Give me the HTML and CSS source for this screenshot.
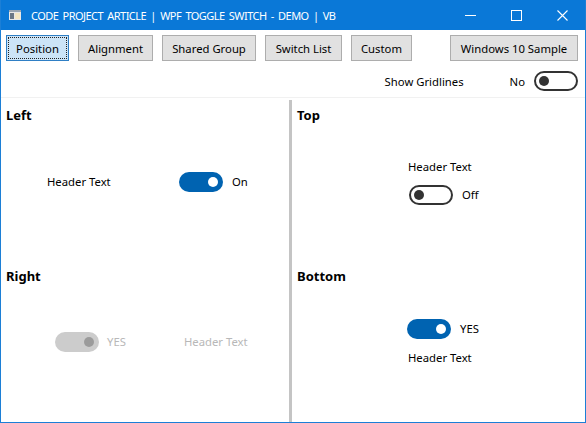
FILE: index.html
```html
<!DOCTYPE html>
<html>
<head>
<meta charset="utf-8">
<link rel="stylesheet" href="styles.css">
</head>
<body>
<div class="window">
  <div class="titlebar">
    <svg class="app-icon" width="12" height="10" viewBox="0 0 12 10">
      <rect x="0" y="0" width="12" height="10" fill="#e8e8e8"/>
      <rect x="0" y="0" width="12" height="2" fill="#9aa6b2"/>
      <rect x="1" y="3" width="4" height="6" fill="#6b7785"/>
      <rect x="6" y="3" width="5" height="6" fill="#f4e7c4"/>
    </svg>
    <span class="title">CODE PROJECT ARTICLE | WPF TOGGLE SWITCH - DEMO | VB</span>
    <div class="controls">
      <span class="ctl"><svg width="11" height="11" viewBox="0 0 11 11"><line x1="0" y1="5.5" x2="11" y2="5.5" stroke="#fff" stroke-width="1"/></svg></span>
      <span class="ctl"><svg width="11" height="11" viewBox="0 0 11 11"><rect x="0.5" y="0.5" width="10" height="10" fill="none" stroke="#fff" stroke-width="1"/></svg></span>
      <span class="ctl"><svg width="11" height="11" viewBox="0 0 11 11"><path d="M0.5 0.5 L10.5 10.5 M10.5 0.5 L0.5 10.5" stroke="#fff" stroke-width="1.1"/></svg></span>
    </div>
  </div>
  <div class="toolbar">
    <div class="btn-row">
      <button class="btn focused w-pos">Position</button>
      <button class="btn w-align">Alignment</button>
      <button class="btn w-shared">Shared Group</button>
      <button class="btn w-list">Switch List</button>
      <button class="btn w-custom">Custom</button>
      <span class="spacer"></span>
      <button class="btn w-win">Windows 10 Sample</button>
    </div>
    <div class="grid-row">
      <span class="lbl">Show Gridlines</span>
      <span class="state">No</span>
      <span class="toggle off"><i class="knob"></i></span>
    </div>
  </div>
  <div class="sep"></div>
  <div class="panels">
    <section class="cell left-col">
      <h2>Left</h2>
      <div class="body body-left">
        <span class="hdr-left">Header Text</span>
        <span class="toggle on"><i class="knob"></i></span>
        <span class="state-txt">On</span>
      </div>
    </section>
    <section class="cell">
      <h2>Top</h2>
      <div class="body body-top">
        <div class="hdr">Header Text</div>
        <div class="sw-row">
          <span class="toggle off"><i class="knob"></i></span>
          <span class="state-txt">Off</span>
        </div>
      </div>
    </section>
    <section class="cell left-col">
      <h2>Right</h2>
      <div class="body body-right">
        <span class="toggle disabled"><i class="knob"></i></span>
        <span class="state-txt dim yes-right">YES</span>
        <span class="dim">Header Text</span>
      </div>
    </section>
    <section class="cell">
      <h2>Bottom</h2>
      <div class="body body-bottom">
        <div class="sw-row">
          <span class="toggle on"><i class="knob"></i></span>
          <span class="state-txt">YES</span>
        </div>
        <div class="hdr hdr-bottom">Header Text</div>
      </div>
    </section>
  </div>
</div>
</body>
</html>
```

FILE: styles.css
```css
* { box-sizing: border-box; }
html, body { margin: 0; padding: 0; background: #fff; }
body {
  font-family: "Noto Sans", "Open Sans", sans-serif;
  font-size: 11.3px;
  color: #000;
}
.window {
  width: 586px;
  height: 423px;
  border: 1px solid #1c7fd6;
  border-top: none;
  display: flex;
  flex-direction: column;
  background: #fff;
  overflow: hidden;
}
.titlebar {
  height: 30px;
  background: #0a78d7;
  color: #fff;
  display: flex;
  align-items: center;
  flex: none;
}
.app-icon { margin-left: 8px; margin-right: 10px; flex: none; }
.title { font-size: 11px; white-space: nowrap; letter-spacing: -0.55px; word-spacing: 2px; }
.controls { margin-left: auto; display: flex; height: 100%; }
.ctl { width: 46px; height: 30px; display: flex; align-items: center; justify-content: center; }
.ctl svg { display: block; }

.toolbar { flex: none; padding: 5px 7px 6px 5px; }
.btn-row { display: flex; gap: 9px; height: 26px; }
.spacer { flex: 1; }
.btn {
  height: 26px;
  font: inherit;
  background: #e1e1e1;
  border: 1px solid #adadad;
  padding: 0;
  color: #000;
  margin: 0;
}
.btn.focused {
  background: #cce4f7;
  border-color: #2f7fc5;
  outline: 1px dotted #222;
  outline-offset: -3px;
}
.w-pos { width: 63px; }
.w-align { width: 75px; }
.w-shared { width: 94px; }
.w-list { width: 77px; }
.w-custom { width: 61px; }
.w-win { width: 128px; }

.grid-row {
  display: flex;
  justify-content: flex-end;
  align-items: center;
  margin-top: 10px;
  height: 20px;
}
.grid-row .lbl { margin-right: 46px; }
.grid-row .state { margin-right: 9px; }

.sep { height: 3px; border-top: 1px solid #f1f1f1; flex: none; }

.toggle {
  width: 44px;
  height: 20px;
  border-radius: 10px;
  display: inline-flex;
  align-items: center;
  flex: none;
}
.toggle .knob { width: 10px; height: 10px; border-radius: 50%; display: block; }
.toggle.on { background: #0063b1; justify-content: flex-end; padding-right: 5px; }
.toggle.on .knob { background: #fff; }
.toggle.off { border: 2px solid #333; padding-left: 3px; }
.toggle.off .knob { background: #333; }
.toggle.disabled { background: #cccccc; justify-content: flex-end; padding-right: 5px; }
.toggle.disabled .knob { background: #9b9b9b; }

.panels {
  flex: 1;
  display: grid;
  grid-template-columns: 291px 1fr;
  grid-template-rows: 161px 1fr;
}
.cell { padding: 6px 5px; line-height: 16px; }
.left-col { border-right: 3px solid #c4c4c4; }
h2 {
  margin: 0;
  font-size: 13px;
  font-weight: bold;
  line-height: 18px;
  height: 18px;
}
.body-left { display: flex; align-items: center; margin: 48px 0 0 41px; }
.hdr-left { width: 132px; }
.state-txt { margin-left: 9px; }
.body-top { margin: 35px 0 0 111px; }
.sw-row { display: flex; align-items: center; }
.body-top .sw-row { margin-top: 10px; margin-left: 1px; }
.body-right { display: flex; align-items: center; margin: 47px 0 0 49px; }
.dim { color: #b8b8b8; }
.yes-right { margin-left: 8px; margin-right: 58px; }
.body-bottom { margin: 34px 0 0 110px; }
.hdr-bottom { margin-top: 11px; margin-left: 1px; }
```
